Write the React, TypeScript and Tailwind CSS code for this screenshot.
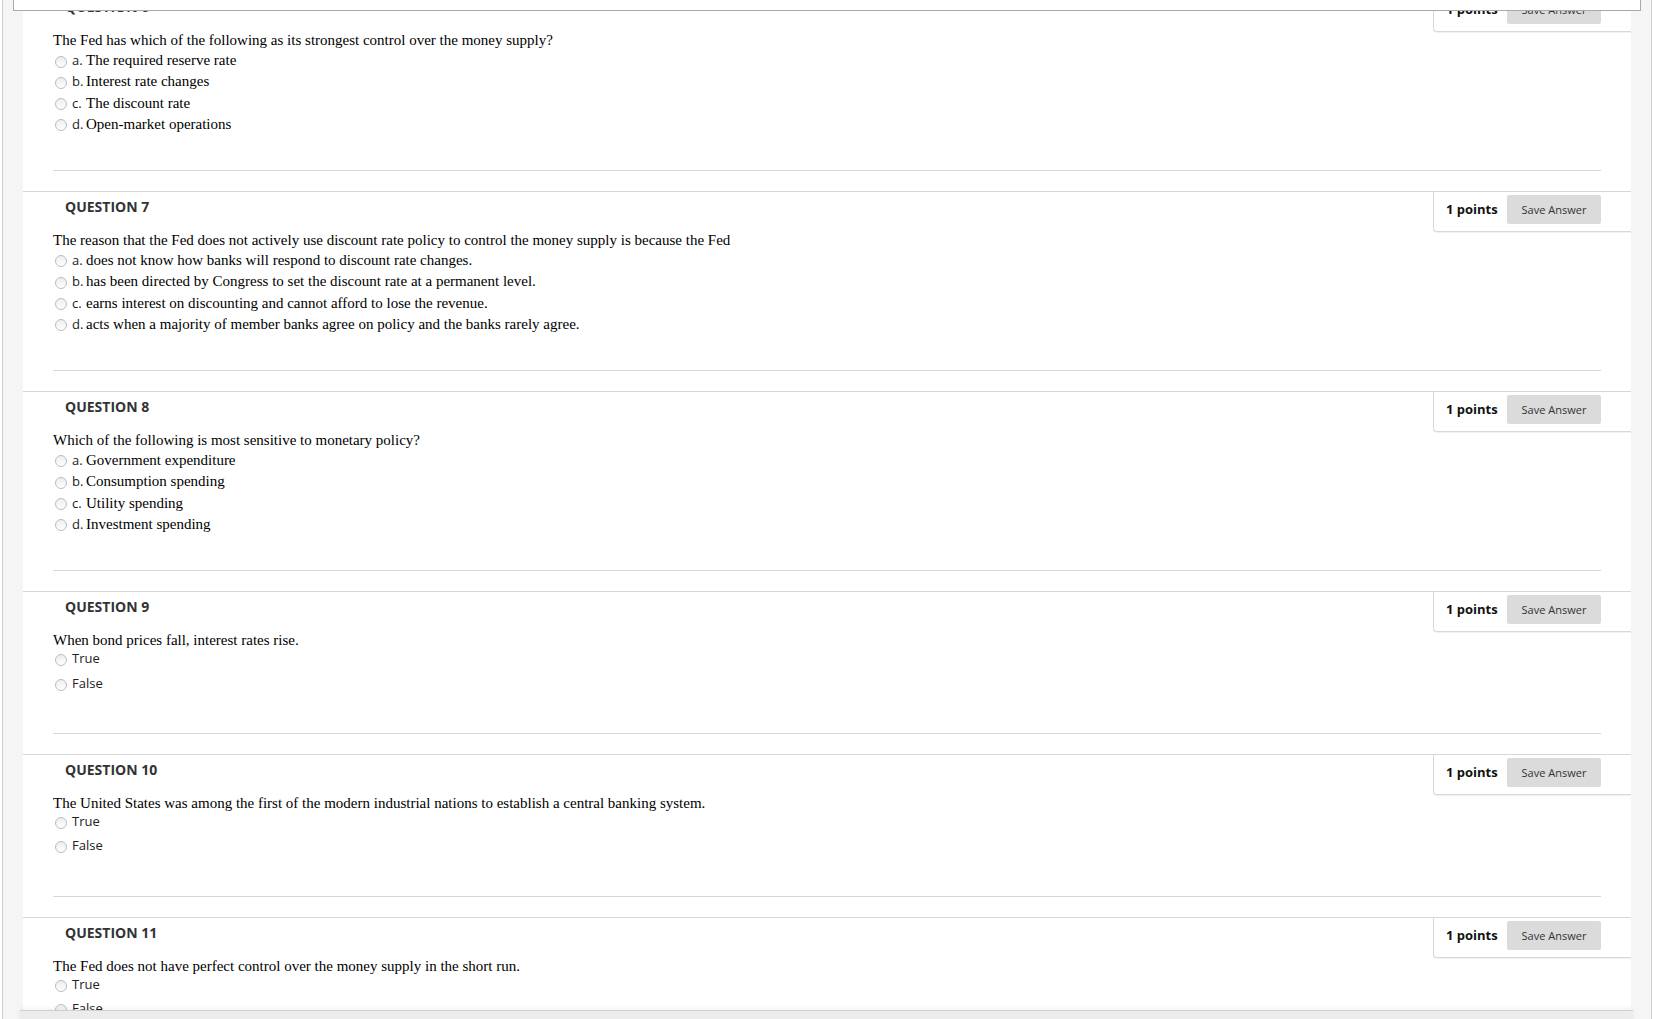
import React from 'react'

interface Question {
  number: number
  text: string
  options: string[]
  trueFalse?: boolean
}

const questions: Question[] = [
  {
    number: 6,
    text: 'The Fed has which of the following as its strongest control over the money supply?',
    options: ['The required reserve rate', 'Interest rate changes', 'The discount rate', 'Open-market operations'],
  },
  {
    number: 7,
    text: 'The reason that the Fed does not actively use discount rate policy to control the money supply is because the Fed',
    options: [
      'does not know how banks will respond to discount rate changes.',
      'has been directed by Congress to set the discount rate at a permanent level.',
      'earns interest on discounting and cannot afford to lose the revenue.',
      'acts when a majority of member banks agree on policy and the banks rarely agree.',
    ],
  },
  {
    number: 8,
    text: 'Which of the following is most sensitive to monetary policy?',
    options: ['Government expenditure', 'Consumption spending', 'Utility spending', 'Investment spending'],
  },
  {
    number: 9,
    text: 'When bond prices fall, interest rates rise.',
    options: ['True', 'False'],
    trueFalse: true,
  },
  {
    number: 10,
    text: 'The United States was among the first of the modern industrial nations to establish a central banking system.',
    options: ['True', 'False'],
    trueFalse: true,
  },
  {
    number: 11,
    text: 'The Fed does not have perfect control over the money supply in the short run.',
    options: ['True', 'False'],
    trueFalse: true,
  },
]

const letters = ['a.', 'b.', 'c.', 'd.']

function Radio({ tf }: { tf?: boolean }) {
  return (
    <span
      className={`ml-[2px] h-[12px] w-[12px] shrink-0 rounded-full border border-[#bdbdbd] bg-gradient-to-b from-[#ededed] to-white ${
        tf ? 'mt-[5px]' : 'mt-[6.5px]'
      }`}
    />
  )
}

function QuestionBlock({ q }: { q: Question }) {
  return (
    <div className="border-t border-[#d7d7d7]">
      {/* header */}
      <div className="flex h-[39px] justify-between">
        <h3 className="pl-[42px] pt-[6px] text-[14px] font-bold leading-[17px] text-[#333]">
          QUESTION {q.number}
        </h3>
        <div className="flex h-[40px] w-[198px] items-start rounded-bl-[4px] border-b border-l border-[#d9d9d9] pl-[12px] pr-[30px] pt-[3px] shadow-[0_1px_1px_rgba(0,0,0,0.06)]">
          <div className="flex w-full items-center justify-between">
            <span className="text-[13px] font-bold leading-[29px] text-[#111]">1 points</span>
            <button className="h-[29px] w-[94px] rounded-[2px] bg-[#dbdbdb] text-[11px] leading-[29px] text-[#333]">
              Save Answer
            </button>
          </div>
        </div>
      </div>

      {/* body */}
      <div className="px-[30px]">
        <p className="font-['Liberation_Serif','Times_New_Roman',serif] text-[15px] leading-[18px] text-black">
          {q.text}
        </p>
        <div>
          {q.options.map((opt, i) =>
            q.trueFalse ? (
              <div key={i} className="flex h-[24.6px] items-start">
                <Radio tf />
                <span className="ml-[5px] text-[13px] leading-[18px] text-[#222]">{opt}</span>
              </div>
            ) : (
              <div key={i} className="flex h-[21.33px] items-start">
                <Radio />
                <span className="ml-[5px] leading-[21.33px]">
                  <span className="inline-block w-[14px] text-[13px] text-[#222]">{letters[i]}</span>
                  <span className="font-['Liberation_Serif','Times_New_Roman',serif] text-[15px] text-black">{opt}</span>
                </span>
              </div>
            )
          )}
        </div>
        <div
          className={`mb-[20px] border-t border-[#d7d7d7] ${q.trueFalse ? 'mt-[34.8px]' : 'mt-[35.67px]'}`}
        />
      </div>
    </div>
  )
}

export default function App() {
  return (
    <div className="relative h-screen overflow-hidden bg-white font-['Open_Sans','Liberation_Sans',sans-serif]">
      <div className="flex h-full pl-[2px] pr-[5px]">
        <div className="flex flex-1 border-x border-[#cdcdcd] bg-[#f5f5f5] px-[20px]">
          <div className="flex-1 bg-white">
            <div className="-mt-[9px]">
              {questions.map((q) => (
                <QuestionBlock key={q.number} q={q} />
              ))}
            </div>
          </div>
        </div>
      </div>

      {/* floating header box at top */}
      <div className="absolute left-[13px] right-[16px] top-[-20px] h-[31px] border border-[#a9a9a9] bg-white" />

      {/* bottom submit bar */}
      <div className="absolute left-[20px] top-[1010px] h-[30px] w-[1613px] border-t border-[#cfcfcf] bg-[#ececec] shadow-[0_-2px_4px_rgba(0,0,0,0.05)]" />
    </div>
  )
}
